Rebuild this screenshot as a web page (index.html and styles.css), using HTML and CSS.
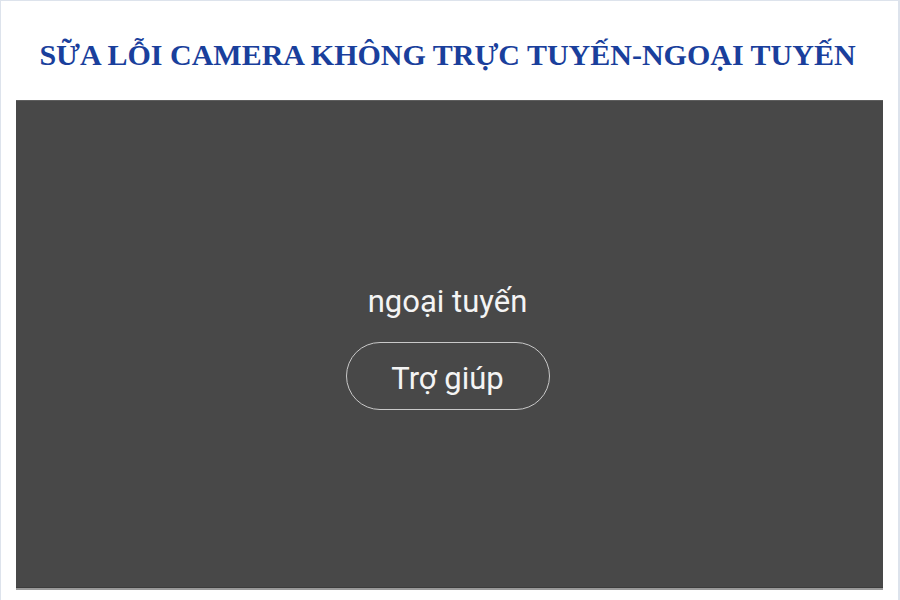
FILE: index.html
```html
<!DOCTYPE html>
<html lang="vi">
<head>
    <meta charset="UTF-8">
    <meta name="viewport" content="width=device-width, initial-scale=1.0">
    <title>Sữa lỗi camera không trực tuyến</title>
    <link rel="stylesheet" href="styles.css">
</head>
<body>
    <div class="page">
        <h1 class="title">SỮA LỖI CAMERA KHÔNG TRỰC TUYẾN-NGOẠI TUYẾN</h1>

        <!-- màn hình camera khi mất kết nối -->
        <div class="screen">
            <p class="status">ngoại tuyến</p>
            <button class="help-btn">Trợ giúp</button>
        </div>
    </div>
</body>
</html>
```

FILE: styles.css
```css
* {
    margin: 0;
    padding: 0;
    box-sizing: border-box;
}

body {
    width: 900px;
    height: 600px;
    background: #ffffff;
    overflow: hidden;
}

/* khung ngoài */
.page {
    width: 900px;
    height: 600px;
    border-top: 1px solid #dde3ec;
    border-left: 1px solid #dde3ec;
    border-right: 2px solid #dde3ec;
    padding: 0 15px 0 15px;
    display: flex;
    flex-direction: column;
}

.title {
    height: 99px;
    display: flex;
    align-items: center;
    justify-content: center;
    padding-top: 8px;
    padding-right: 4px;
    font-family: "Liberation Serif", "Times New Roman", serif;
    font-size: 30px;
    font-weight: bold;
    color: #1a3f9c;
    white-space: nowrap;
}

/* vùng hiển thị camera */
.screen {
    width: 867px;
    height: 488px;
    background: #484848;
    border-top: 1px solid #5e5e5e;
    border-bottom: 1px solid #3c3c3c;
    box-shadow: 0 2px 0 #9a9a9a;
    display: flex;
    flex-direction: column;
    align-items: center;
    justify-content: center;
    padding-top: 6px;
    padding-right: 4px;
    font-family: Roboto, "Noto Sans", sans-serif;
    color: #f4f4f4;
}

.status {
    font-size: 31px;
    line-height: 36px;
    margin-bottom: 22px;
}

.help-btn {
    width: 204px;
    height: 68px;
    padding-top: 4px;
    border: 1.5px solid #c9c9c9;
    border-radius: 34px;
    background: transparent;
    color: #f4f4f4;
    font-family: Roboto, "Noto Sans", sans-serif;
    font-size: 31px;
}
```
